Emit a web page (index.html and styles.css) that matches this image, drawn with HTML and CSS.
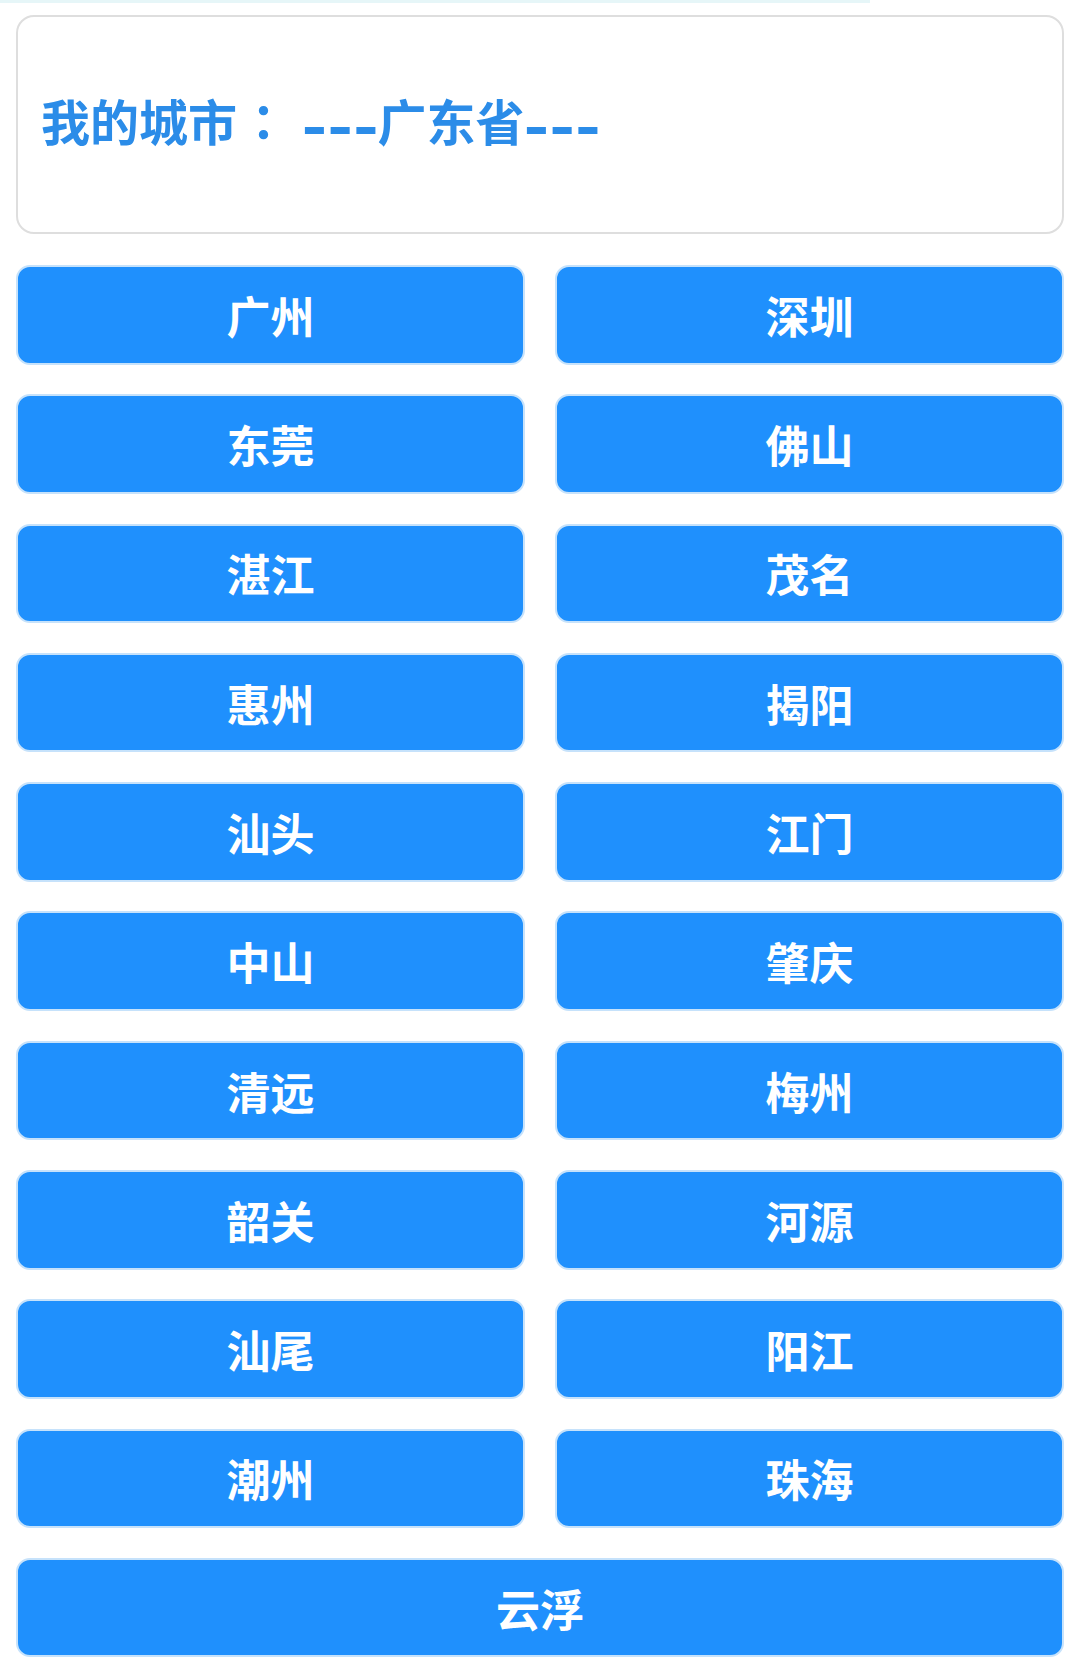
FILE: index.html
```html
<!DOCTYPE html>
<html lang="zh-CN">
<head>
<meta charset="utf-8">
<title>我的城市</title>
<link rel="stylesheet" href="styles.css">
</head>
<body>
<div class="topline"></div>
<main class="page">
  <section class="header">
    <h1 class="title">我的城市<span class="colon">：</span><span class="dash">---</span>广东省<span class="dash">---</span></h1>
  </section>
  <div class="grid">
    <button class="city">广州</button>
    <button class="city">深圳</button>
    <button class="city">东莞</button>
    <button class="city">佛山</button>
    <button class="city">湛江</button>
    <button class="city">茂名</button>
    <button class="city">惠州</button>
    <button class="city">揭阳</button>
    <button class="city">汕头</button>
    <button class="city">江门</button>
    <button class="city">中山</button>
    <button class="city">肇庆</button>
    <button class="city">清远</button>
    <button class="city">梅州</button>
    <button class="city">韶关</button>
    <button class="city">河源</button>
    <button class="city">汕尾</button>
    <button class="city">阳江</button>
    <button class="city">潮州</button>
    <button class="city">珠海</button>
    <button class="city wide">云浮</button>
  </div>
</main>
</body>
</html>
```

FILE: styles.css
```css
html, body {
  margin: 0;
  padding: 0;
  background: #ffffff;
}
body {
  font-family: "Noto Sans CJK SC", "Noto Sans", sans-serif;
  position: relative;
}
.topline {
  position: absolute;
  top: 0;
  left: 0;
  width: 870px;
  height: 3px;
  background: #e6f6f8;
}
.page {
  padding: 15px 16px 0 16px;
}
.header {
  height: 219px;
  box-sizing: border-box;
  border: 2px solid #dedede;
  border-radius: 18px;
  display: flex;
  align-items: center;
  padding: 0 0 0 23px;
}
.title {
  margin: 0;
  font-size: 49px;
  font-weight: 700;
  color: #2b8ce8;
  line-height: 1;
  padding-bottom: 10px;
  white-space: nowrap;
}
.colon {
  font-family: "Noto Sans CJK TC", "Noto Sans CJK SC", sans-serif;
  display: inline-block;
  margin-left: 2px;
  margin-right: 14px;
}
.dash {
  display: inline-block;
  transform: scale(1.42, 1.35);
  margin: 0 10px 0 11px;
}
.grid {
  margin-top: 31px;
  display: grid;
  grid-template-columns: 1fr 1fr;
  column-gap: 30px;
  row-gap: 29.8px;
}
.city {
  height: 99.5px;
  box-sizing: border-box;
  border: 2px solid #c6e2fb;
  border-radius: 14px;
  background: #1f90fd;
  color: #ffffff;
  font-family: "Noto Sans CJK SC", "Noto Sans", sans-serif;
  font-size: 44px;
  font-weight: 700;
  padding: 0;
  margin: 0;
  line-height: 1;
}
.wide {
  grid-column: 1 / 3;
}
```
